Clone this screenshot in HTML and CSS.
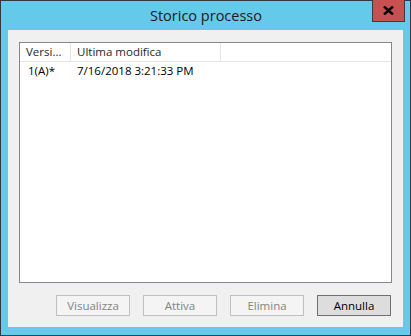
FILE: index.html
```
<html lang="it">
<head>
    <meta charset="UTF-8">
    <link rel="stylesheet" href="styles.css">
    <title>Storico processo</title>
</head>
<body>

    <div class="window">
        <div class="titlebar">
            <span></span>
            <span class="title">Storico processo</span>
            <button type="button" class="close-btn">
                <svg width="11" height="9" viewBox="0 0 11 9">
                    <path d="M1 0.5 L10 8.5 M10 0.5 L1 8.5" stroke="#000" stroke-width="2.4"/>
                </svg>
            </button>
        </div>

        <div class="client">
            <div class="listview">
                <div class="lv-header">
                    <div class="col col-ver">Versi...</div>
                    <div class="col col-date">Ultima modifica</div>
                    <div class="col col-rest"></div>
                </div>
                <div class="lv-row">
                    <div class="col col-ver">1(A)*</div>
                    <div class="col col-date">7/16/2018 3:21:33 PM</div>
                </div>
            </div>

            <div class="buttons">
                <button type="button" class="btn" disabled>Visualizza</button>
                <button type="button" class="btn" disabled>Attiva</button>
                <button type="button" class="btn" disabled>Elimina</button>
                <button type="button" class="btn btn-default">Annulla</button>
            </div>
        </div>
    </div>

</body>
</html>
```

FILE: styles.css
```
body {
    margin: 0;
    background-color: #2b2b2b;
    font-family: "Open Sans", "Noto Sans", sans-serif;
    font-size: 11.5px;
}

.window {
    width: 411px;
    height: 336px;
    box-sizing: border-box;
    border: 1px solid #2f3a40;
    background-color: #65c9ea; /* cadre cyan */
    display: flex;
    flex-direction: column;
}

.titlebar {
    height: 29px;
    display: grid;
    grid-template-columns: 1fr auto 1fr;
    align-items: start;
}

.title {
    font-size: 14.5px;
    color: #1a1a1a;
    line-height: 29px;
    padding-left: 1px;
}

.close-btn {
    justify-self: end;
    margin-top: -1px;
    margin-right: 5px;
    width: 33px;
    height: 22px;
    box-sizing: border-box;
    padding: 0;
    border: 1px solid #3c3c3c;
    border-top: none;
    background-color: #c75050;
    display: flex;
    align-items: center;
    justify-content: center;
}

.client {
    flex: 1;
    margin: 0 7px 8px 7px;
    background-color: #f0f0f0;
    padding: 12px 11px 0 11px;
    display: flex;
    flex-direction: column;
}

.listview {
    height: 241px;
    box-sizing: border-box;
    border: 1px solid #828790;
    background-color: #ffffff;
    color: #000;
}

.lv-header {
    display: flex;
    height: 18px;
    border-bottom: 1px solid #e5e5e5;
    color: #1e1e1e;
}

.lv-header .col {
    border-right: 1px solid #e5e5e5;
    line-height: 18px;
}

.lv-header .col-rest {
    border-right: none;
    flex: 1;
}

.col {
    box-sizing: border-box;
    padding-left: 6px;
    white-space: nowrap;
    overflow: hidden;
}

.col-ver {
    width: 51px;
}

.col-date {
    width: 150px;
}

.lv-row {
    display: flex;
    height: 17px;
    line-height: 17px;
}

.lv-row .col-ver {
    padding-left: 8px;
}

.buttons {
    display: flex;
    justify-content: flex-end;
    gap: 13px;
    margin-top: 12px;
    padding-right: 1px;
}

.btn {
    width: 74px;
    height: 21px;
    box-sizing: border-box;
    border: 1px solid #adadad;
    background-color: #f4f4f4;
    font-family: "Open Sans", "Noto Sans", sans-serif;
    font-size: 11.5px;
    color: #000;
    padding: 0;
}

.btn:disabled {
    border-color: #bfbfbf;
    background-color: #f4f4f4;
    color: #838383;
}

.btn-default {
    border-color: #707070;
    background-color: #dddddd;
}
```
